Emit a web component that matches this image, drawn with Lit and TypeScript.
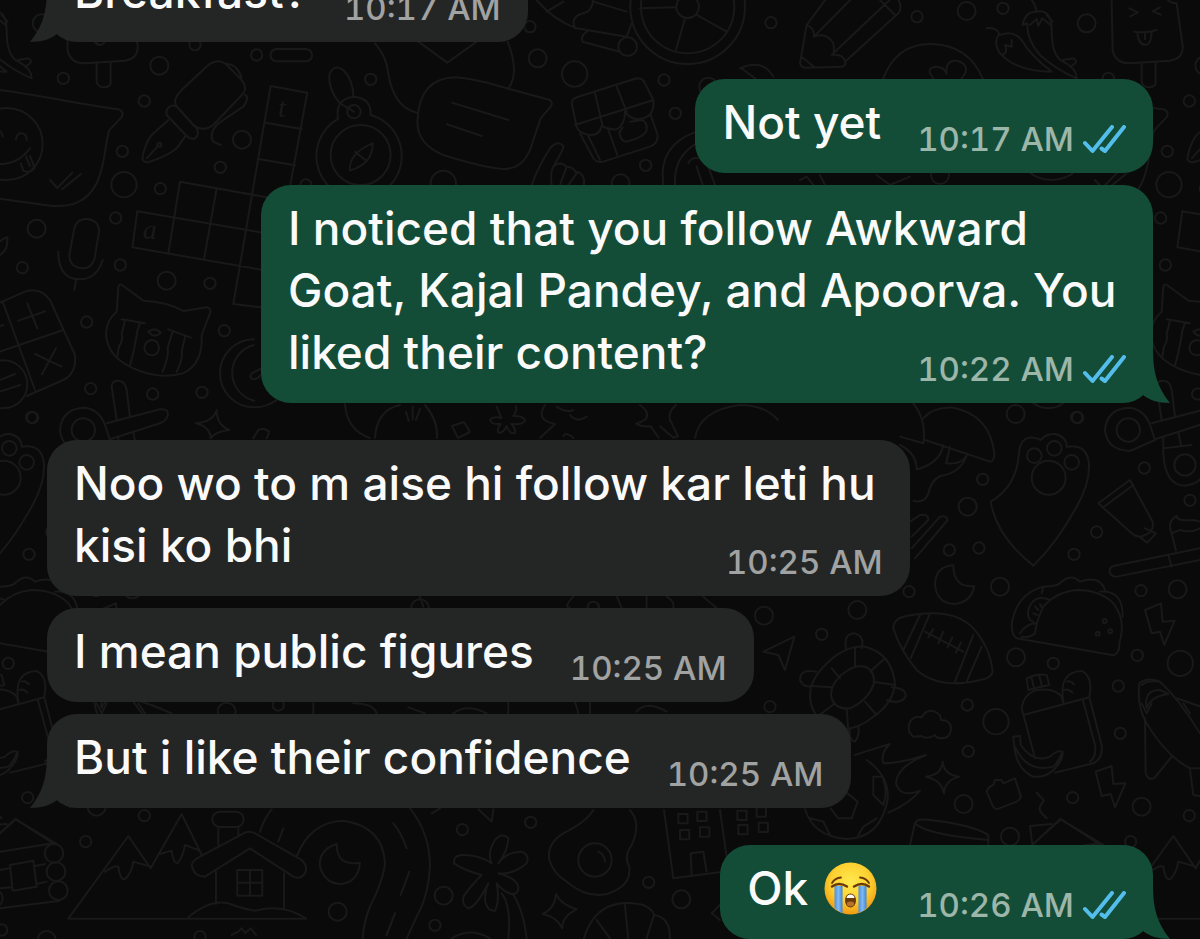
import { LitElement, html, svg, css, nothing, type TemplateResult } from "lit";
import { customElement, property } from "lit/decorators.js";

type Message = {
  side: "in" | "out";
  text: string;
  time: string;
  crying?: boolean;
  tail?: boolean;
  first?: boolean;
};

const messages: Message[] = [
  { side: "in", text: "Breakfast?", time: "10:17 AM", tail: true },
  { side: "out", text: "Not yet", time: "10:17 AM", first: true },
  {
    side: "out",
    text: "I noticed that you follow Awkward Goat, Kajal Pandey, and Apoorva. You liked their content?",
    time: "10:22 AM",
    tail: true,
  },
  { side: "in", text: "Noo wo to m aise hi follow kar leti hu kisi ko bhi", time: "10:25 AM", first: true },
  { side: "in", text: "I mean public figures", time: "10:25 AM" },
  { side: "in", text: "But i like their confidence", time: "10:25 AM", tail: true },
  { side: "out", text: "Ok", crying: true, time: "10:26 AM", tail: true, first: true },
];

/* Wallpaper doodles, grouped by region. Each group is drawn at three times its size. */
type Dot = [number, number, number];
type Letter = [number, number, string];
type Region = { x: number; y: number; dots: Dot[]; lines: string[]; letters?: Letter[] };

const S = 17;
const M = 27;
const L = 38;

const regions: Region[] = [
  {
    x: 0,
    y: 0,
    dots: [
      [585, 134, S], [770, 165, S], [478, 197, M], [433, 303, S], [1112, 238, S], [367, 454, S],
      [726, 419, M], [661, 502, S], [372, 554, L], [481, 566, S], [110, 686, M], [347, 654, S], [67, 803, S],
      [361, 795, S], [500, 842, M], [630, 850, S], [918, 555, S], [478, 434, 6],
      [20, 432, 108], [1082, 465, 90], [1062, 335, 20],
    ],
    letters: [
      [834, 352, "t"],
      [428, 718, "a"],
    ],
    lines: [
      "M-40,265 C100,280 230,312 355,328 Q372,333 366,350 L327,392 C312,450 315,500 290,550 C260,610 210,622 150,617 L-120,580",
      "M48,418 q2,-20 18,-18 q14,2 14,20 M-20,395 q25,-10 28,15 M-60,470 C-20,505 50,500 90,445 M62,490 l8,22 q20,10 34,-8 l-14,-36 M78,470 l12,28",
      "M150,540 l22,24 l45,-46 M186,568 l57,-46",
      "M525,300 Q530,285 545,270 L625,195 Q650,175 675,190 L720,235 Q745,260 730,280 L640,375 Q610,398 580,375 L535,325 Q525,315 525,300",
      "M500,345 Q495,325 515,317 Q528,315 535,325 L590,385 Q600,405 585,415 Q572,420 560,408 Z",
      "M505,360 L455,405 Q435,430 427,475 Q430,488 445,487 Q500,470 530,445 L555,410 M440,475 L475,437",
      "M680,192 q30,0 45,40 M735,285 q15,5 -5,35 L655,370 q-30,30 -15,55 l22,10",
      "M812,258 L922,278 L870,560 M812,258 L700,912 L782,922 M797,368 L905,387 M780,478 L885,496 M540,545 L800,592 M540,545 L505,760 M412,634 L800,700 M412,634 L397,742 L800,812 M650,565 L612,778",
      "M1014,357 A128 128 0 1 0 1112,345 Q1115,295 1062,290 Q1005,295 1014,357",
      "M1060,290 Q1060,240 1030,210 Q1000,190 988,225 Q985,270 1020,310 L1062,335",
      "M1050,512 Q1045,460 1118,430 Q1120,490 1050,512 M1065,455 l35,28",
      "M222,690 Q228,655 262,657 Q298,662 297,695 L284,775 Q275,807 245,805 Q208,800 208,765 Z",
      "M175,755 Q175,835 235,838 Q290,840 308,780 M228,840 l-5,30",
      "M0,765 Q25,750 22,712 Q5,715 -10,735",
      "M830,147 h88 a18,18 0 0 1 0,37 h-88 a18,18 0 0 1 0,-37",
    ],
  },
  {
    x: 380,
    y: 0,
    dots: [
      [450, 80, S], [473, 175, M], [584, 222, L], [852, 240, S], [886, 340, S], [797, 496, S], [190, 550, L],
      [722, 550, M], [1173, 68, S], [985, 260, M], [923, 20, 172], [923, 20, 140], [923, 20, 34], [743, 140, 28],
    ],
    lines: [
      "M-15,130 Q20,170 25,220 Q40,320 110,338 M115,125 L202,188 L290,125 M383,125 Q420,220 385,265",
      "M225,232 Q280,235 370,262 L510,300 Q520,310 512,320 L482,355 L450,450 Q425,510 365,507 Q300,500 190,465 Q105,430 113,355 Q120,235 225,232 M216,308 L385,360 M201,373 L305,408",
      "M455,555 Q475,500 510,445 Q530,420 550,437 Q553,445 520,500 Q510,520 515,555 M520,500 Q540,480 560,500 L540,555 M560,500 Q580,500 590,520 L565,555 M590,515 Q615,520 612,555",
      "M575,310 Q575,298 590,292 L770,235 Q790,235 795,250 L820,300 Q825,345 790,355 Q755,365 735,335 Q735,375 710,388 Q690,390 665,378 Q660,405 630,405 Q595,400 590,380 Z M585,375 L820,300 M645,280 L668,378 M710,260 L740,335",
      "M600,400 L640,475 Q650,490 670,485 L810,440 Q835,430 833,405 L812,345 M685,390 L712,465 M625,408 L660,480 M718,400 l10,-18 M750,365 L788,360 q15,10 12,30 q-5,20 -60,35 q-20,0 -22,-30",
      "M780,25 L888,22 M915,55 L888,150 M950,45 L1040,95",
      "M470,0 Q520,60 590,85 L740,110 M500,35 L550,5 M585,85 Q570,50 610,40 Q635,35 640,0 M640,5 L740,35 M620,95 Q600,110 608,125 L720,155 M740,110 L755,70",
      "M950,395 Q850,430 848,520 L850,555 M950,430 Q880,470 885,555 M925,490 q10,-20 30,-15 M950,500 l18,55 M985,500 l20,55",
      "M1080,205 Q1150,175 1180,230 M1085,205 l40,30",
    ],
  },
  {
    x: 800,
    y: 0,
    dots: [[351, 50, S], [500, 33, M], [609, 25, S], [860, 70, M], [925, 235, S], [420, 525, M]],
    lines: [
      "M120,-60 L20,75 L0,190 Q5,205 20,203 L125,200 Q140,195 135,185 L295,40 Q310,20 290,-10 M20,75 Q45,85 42,110 Q80,95 100,130 Q105,165 95,165 Q130,160 135,185 M42,110 L190,-40 M100,160 L290,-20 M240,0 L285,45 M5,170 L45,203",
      "M250,235 Q290,130 395,132 Q505,135 548,235 M400,235 Q375,205 405,200 Q435,200 440,222 Q435,180 470,182 Q505,190 496,220 L485,235",
      "M695,0 Q710,20 708,35 Q755,25 755,90 Q755,170 790,185 Q830,205 830,235 Q770,210 720,165 Q680,120 682,70 L668,75 Q675,35 708,35 M740,45 L758,65 M690,75 l20,-18 l5,20 l12,-22 l25,20",
      "M560,85 Q590,80 600,105 Q640,90 665,120 Q690,165 755,215 Q650,215 600,160 Q580,130 595,105 M605,165 q20,-5 10,-30 l20,5 l0,-20 M790,180 l30,-5 q20,10 -10,25",
      "M935,0 L938,150 Q945,190 990,190 L1110,182 Q1155,175 1147,130 L1130,10 Q1110,10 1100,-5 M1025,192 V245 Q1030,262 1048,262 Q1068,260 1067,245 V188",
      "M988,25 l25,12 l-22,12 M1080,22 l-22,12 l25,10 M1003,95 Q1040,100 1070,90 M1012,98 Q1015,135 1038,135 Q1055,130 1055,95 M1035,98 v20",
      "M0,540 l20,-10 l20,25 M60,525 l15,30 M230,525 l40,30 l60,-25",
    ],
  },
  {
    x: 0,
    y: 280,
    dots: [
      [260, 126, S], [673, 152, S], [272, 326, S], [458, 342, S], [606, 337, S], [98, 413, S],
      [10, 313, 72], [250, 450, 35], [420, 555, 32],
    ],
    lines: [
      "M350,95 L355,20 Q360,8 370,18 L430,62 Q500,65 550,93 L620,82 Q635,85 630,100 L605,165 Q610,250 550,280 Q480,300 400,265 Q320,230 318,160 Q320,120 350,95",
      "M365,118 l70,12 M375,120 q-5,25 -10,40 q5,20 -8,40 l-5,30 M420,128 q-10,25 -12,50 l-8,40 l-10,38 M445,155 q20,-15 38,3 q-20,20 -38,-3 M505,148 l68,25 M518,155 q-10,30 -15,50 q5,20 -15,70 M555,170 q-5,25 -10,45 q5,20 -15,60",
      "M455,180 q20,0 22,24 q-3,22 -22,22 q-20,-2 -22,-22 q3,-22 22,-24",
      "M0,68 L75,35 Q120,20 150,60 L225,225 Q230,280 190,300 L80,348 M8,65 L105,330 M0,215 L190,150 M82,70 l30,75 M55,122 l80,-28 M105,222 l80,38 M168,205 l-42,78 M-30,140 l40,-4 M0,300 l45,-18 M0,335 l60,-20",
      "M330,480 L255,513 Q185,510 180,450 Q185,385 255,383 Q300,390 315,435 Z",
      "M335,320 Q335,300 360,303 Q375,305 380,330 L390,410 M335,320 L350,420 M320,430 L480,388 Q510,385 502,410 Q495,425 480,430 L330,478 M355,475 V520 Q360,617 420,617 Q480,610 490,550 M355,505 L440,495 M400,457 l8,38",
      "M762,178 A102 102 0 0 0 762,382 Q800,382 830,360 M762,195 A86 86 0 0 0 762,362 M785,265 l-30,15 q-10,15 5,18 q15,-2 25,-15",
      "M650,390 Q650,435 688,450 Q645,455 632,475 Q630,440 588,430 Q640,425 650,390 M760,475 L775,450 Q790,440 808,455 L800,475",
    ],
  },
  {
    x: 900,
    y: 340,
    dots: [
      [347, 222, M], [530, 232, S], [248, 418, S], [203, 500, M], [733, 384, S], [870, 481, S], [590, 576, S],
      [522, 643, S], [148, 630, S], [237, 624, S], [27, 755, S], [300, 740, M], [723, 752, S], [833, 748, M],
      [403, 347, 22], [463, 325, 22], [515, 367, 22], [446, 413, 51],
    ],
    lines: [
      "M400,677 Q290,590 272,485 Q350,440 357,340 Q360,290 400,293 Q415,295 422,300 Q440,280 465,282 Q500,290 500,320 Q560,310 567,370 Q570,430 530,500 Q470,610 400,677",
      "M40,190 Q80,240 70,310 L0,290 M70,235 Q100,200 160,203 Q270,225 283,340 Q283,365 270,365 L75,300 M0,315 Q50,340 50,388 Q120,370 130,315 M150,320 L138,370 Q180,375 200,348 M200,348 Q180,400 120,408 Q95,420 85,460 Q75,490 40,483",
      "M30,545 L60,525 Q85,520 85,540 L35,590 M35,625 L120,530 Q140,525 143,540 L45,655",
      "M595,490 L690,420 L758,545 Q762,570 745,580 L725,590 Q705,590 695,580 Z M610,502 L700,435 M735,565 L768,580 L742,608 L718,590",
      "M640,678 L900,625 M650,710 L900,660 M640,678 Q625,685 630,700 Q638,712 650,710 M805,645 L815,680 M815,580 L828,632 M815,580 Q800,545 830,528 Q830,545 880,540 L900,545 M815,580 L840,570 Q870,580 900,565",
      "M160,675 Q105,680 105,735 Q110,790 165,792 Q215,785 223,738 Q160,745 160,675",
    ],
  },
  {
    x: 740,
    y: 600,
    dots: [
      [72, 47, M], [352, 30, M], [245, 103, S], [90, 320, S], [682, 315, S], [768, 365, L], [685, 454, S],
      [671, 612, M], [828, 172, M], [940, 190, S], [1192, 166, S], [1321, 190, L], [1135, 258, S],
      [1141, 400, S], [998, 593, S], [1205, 620, M], [1348, 647, S], [810, 710, M], [1172, 725, S],
    ],
    lines: [
      "M70,155 L163,110 L135,210 L115,165 Z",
      "M375,140 Q455,160 465,250 Q460,310 400,350 Q340,400 270,385 Q200,340 212,265 Q225,215 290,165 Q335,135 375,140",
      "M365,198 Q405,205 402,250 Q385,300 330,325 Q280,330 273,285 Q275,240 325,210 Q345,198 365,198",
      "M345,140 V200 M275,205 L300,235 M215,258 L275,262 M225,355 L285,310 M325,395 L320,325 M410,345 L375,305 M465,255 L400,245 M435,175 L390,215",
      "M318,145 Q310,100 345,100 Q375,110 365,145 M230,215 Q180,205 180,240 Q190,265 215,258 M455,262 Q500,265 497,290 Q480,315 440,300 M330,385 Q325,420 345,425 Q360,405 355,380",
      "M460,85 Q460,55 500,48 Q640,20 700,85 Q750,140 758,215 Q755,235 720,240 Q600,270 530,210 Q480,150 460,85 M540,45 L490,150 M570,40 L512,175 M700,105 L645,245 M725,140 L680,245 M555,95 L670,155 M565,112 l15,-25 M595,130 l15,-35 M622,143 l15,-30 M648,158 l15,-30",
      "M520,410 Q500,395 508,370 Q520,345 545,352 Q560,325 585,335 Q605,345 603,360 Q635,360 633,390 Q630,415 605,415 Q590,415 585,405 Q560,420 545,408 Z",
      "M380,480 Q450,530 443,600 Q420,715 320,717 Q220,710 195,628 M345,465 L375,455 L450,432 Q420,460 430,490 Q480,490 558,465 Q470,500 468,550 Q480,595 540,572 Q510,610 445,638 M400,530 L428,530 Q445,580 430,615 L400,585 Z M285,590 L320,578 L353,605 L335,655 L295,655 L272,625 M210,655 l40,10 l20,40 M355,705 l15,-25 l40,-25",
      "M608,485 Q612,525 658,530 Q615,540 612,580 Q605,540 558,530 Q605,525 608,485",
      "M510,735 L525,670 Q530,655 570,660 Q700,675 745,705 L745,735 M525,670 Q560,705 745,720",
      "M740,575 Q745,560 760,555 L765,540 L785,540 L790,550 L825,535 L843,590 Q840,600 830,605 L770,628 Q760,625 755,610 Z",
    ],
  },
  {
    x: 1000,
    y: 420,
    dots: [[314, 603, 6], [331, 634, 6], [293, 641, 6]],
    lines: [
      "M50,655 Q30,640 37,600 Q55,520 130,500 Q175,500 185,485 Q215,460 240,485 Q300,465 315,510 M50,655 L340,706 Q360,700 358,670 Q380,600 340,550 Q300,510 230,510 Q170,515 130,560 Q110,600 105,640 M125,520 l5,-20 M300,515 Q370,510 368,590",
      "M60,640 Q80,610 110,610 M65,650 Q90,655 105,640 M150,540 Q100,520 85,570 Q80,600 100,605 M105,560 l10,10 M120,552 l5,10 M100,580 l12,5",
      "M435,570 L483,550 L488,605 L524,602 L493,675 L480,635 L455,640 Z M287,1055 L335,1038 L340,1092 L376,1090 L345,1162 L332,1122 L305,1128 Z",
      "M70,885 L268,832 M65,865 Q70,825 105,812 Q160,800 185,830 L190,850 M65,865 L105,1015 M248,838 L285,975 Q290,1010 270,1025 M268,832 L305,975 Q310,1015 280,1030 L165,1058",
      "M80,775 Q110,760 140,765 L148,795 Q120,800 85,810 Z M95,775 l8,32 M118,768 l8,30 M190,845 Q175,755 245,753 Q280,770 268,830 M200,785 q12,-5 22,8 M192,810 q15,-5 25,8",
      "M40,950 L60,948 L62,975 Q100,1030 150,1010 Q170,990 188,995 Q190,1010 180,1025 Q150,1075 100,1070 Q50,1050 42,975 Z M45,980 Q80,1060 160,1040 Q180,1020 185,1000",
      "M600,940 Q540,840 480,785 Q440,770 418,790 Q410,860 440,910 Q500,1010 570,1045 L620,1045 M530,835 L620,866 M435,895 L437,1060 Q445,1085 465,1072 L515,1010 M440,865 Q430,810 480,810 L505,822 Q450,830 440,865 M425,795 Q440,780 480,785 M570,1050 L580,1125 L600,1128",
      "M110,1118 L132,1142 Q110,1165 125,1180 L140,1195 M155,1212 L90,1218 L97,1275 L180,1197 L310,1275",
    ],
  },
  {
    x: 0,
    y: 680,
    dots: [
      [1013, 695, M], [680, 95, M], [835, 75, S], [140, 780, M], [600, 770, S], [5, 750, S],
      [162, 520, 28], [168, 575, 28], [175, 632, 28], [-20, 655, 28],
    ],
    lines: [
      "M0,460 L48,418 L160,490 L0,515 M30,555 L100,542 L110,620 L38,632 Z M0,570 L28,565 M105,558 L135,552 M110,612 L140,605 M0,625 L35,622 M0,685 L180,662",
      "M918,716 H205 L385,468 L452,565 L545,402 L605,525 M315,575 Q345,555 355,560 Q360,600 375,598 Q395,580 400,545 L452,560 M480,522 L515,512 Q520,550 532,550 Q550,530 555,495 L600,512",
      "M575,555 Q580,540 600,530 L735,458 Q750,452 765,460 L905,540 Q925,560 915,580 Q900,600 880,590 L750,505 L615,590 Q580,590 575,555 M648,575 V672 M852,580 V685 M565,712 Q640,650 700,675 Q740,690 768,692 Q850,670 918,716 M655,495 V445 M715,440 V465",
      "M660,395 H708 a22,22 0 0 1 0,46 H660 a22,22 0 0 1 0,-46 M712,570 h75 v77 h-75 Z M750,570 V647 M712,608 H787",
      "M890,530 Q930,425 1030,422 Q1150,440 1155,550 Q1150,600 1110,680 Q1090,730 1088,777 M1160,765 L1185,700 M835,485 L850,445 M780,455 Q790,420 815,388",
      "M1010,492 Q955,510 960,560 Q975,612 1025,612 Q1075,605 1080,548 Q1010,560 1010,492",
      "M290,70 l15,30 l15,-30 M415,70 l20,30 M455,75 l60,25 M940,70 v30 M1060,70 Q1120,70 1130,100 M695,765 l20,-10 l10,-10 l10,14 l18,-14 l15,20",
    ],
  },
  {
    x: 380,
    y: 700,
    dots: [[247, 389, S], [452, 367, S], [806, 547, S], [904, 598, M], [191, 587, M], [165, 676, S], [645, 480, 50]],
    lines: [
      "M90,325 Q150,400 150,500 Q145,590 110,650 L80,715 M40,370 Q65,400 80,445 M88,515 L62,585 M45,640 L20,705",
      "M335,490 Q320,460 345,420 Q365,395 385,415 Q385,450 355,490 Q380,455 425,455 Q450,465 440,490 Q400,525 355,520 Q410,535 415,560 Q415,585 395,582 Q370,575 350,550 Q360,600 345,632 Q320,635 315,600 Q315,570 325,550 Q290,620 265,625 Q245,615 250,590 Q270,560 305,525 Q250,510 222,490 Q220,465 250,465 Q300,465 335,490 M365,580 Q395,620 385,715 M400,585 Q430,630 440,715",
      "M640,330 Q620,365 550,400 Q500,430 508,480 Q520,520 560,545 Q620,595 680,582 Q755,560 748,500 Q730,470 755,435 Q785,370 750,330 M655,455 q20,10 20,30",
      "M528,583 Q545,615 590,628 Q545,650 547,685 Q530,650 488,642 Q525,625 528,583",
      "M612,715 Q630,650 680,622 Q730,600 790,615 Q820,630 822,645 Q860,650 868,690 L870,715 M650,660 L690,715 M735,615 L745,715 M822,645 L800,715",
      "M852,330 L880,535 L1030,515 M1020,330 L1040,470 M935,525 L932,460 L970,455 L980,515 M895,342 h28 v28 h-28 Z M952,335 h28 v28 h-28 Z M900,390 h28 v28 h-28 Z M960,382 h28 v28 h-28 Z M1072,332 h28 v28 h-28 Z M1130,322 h28 v28 h-28 Z M1075,375 h28 v28 h-28 Z M1136,368 h28 v28 h-28 Z",
      "M155,340 L180,325 M295,328 L335,365 L340,328 M215,715 Q270,680 330,715 M995,640 L1020,615 M995,640 L1020,660",
      "M85,22 L135,40 M220,40 Q260,10 320,40 M385,5 v35 M585,5 l10,35 M630,5 v35 M770,35 Q800,0 860,35",
    ],
  },
  {
    x: 340,
    y: 400,
    dots: [[240, 625, M], [760, 622, S]],
    lines: [
      "M15,12 Q20,90 90,114 M105,114 Q110,30 180,15 M255,15 Q294,60 291,114 M198,36 l8,26 M218,20 v38 M240,26 l-12,34",
      "M336,78 l36,-12 l18,30 l-36,18 Z",
      "M470,20 q10,25 14,34 q-24,-6 -34,6 q4,14 32,12 q-14,14 -6,26 q14,2 24,-20 q8,24 24,22 q6,-10 -10,-28 q30,4 42,-10 q-4,-14 -36,-14 q12,-14 8,-30",
      "M615,15 Q585,60 645,72 L600,114 M650,20 q30,20 50,10 M690,45 q20,25 50,5 M700,114 q-20,-20 -30,-6",
      "M900,15 q30,20 18,42 q-14,10 -30,14 q16,10 44,8 l24,34 M1008,15 q-24,20 -18,44 l24,50 l-14,4 l-40,-34",
      "M1065,114 Q1080,30 1200,15 Q1275,15 1314,60",
      "M240,590 l10,30 M700,590 q-30,30 -10,35 M830,588 l15,35 M920,590 v34 M980,590 q25,15 20,34 M1090,590 q10,10 40,34",
    ],
  },
];

/* The wallpaper repeats sideways every 1045 units. */
const REPEAT = 1045;

@customElement("chat-wallpaper")
export class ChatWallpaper extends LitElement {
  static styles = css`
    :host {
      display: block;
      overflow: hidden;
    }
    .art {
      display: block;
      width: 100%;
      height: 100%;
    }
    .line {
      fill: none;
      stroke: #191919;
      stroke-width: 6;
      stroke-linecap: round;
      stroke-linejoin: round;
    }
    .letter {
      fill: #191919;
      stroke: none;
      font: italic 84px "Liberation Serif", serif;
    }
  `;

  private tile(shift: number) {
    return svg`<g transform="translate(${shift} 0)">
      ${regions.map(
        (r) => svg`<g class="line" transform="translate(${r.x} ${r.y}) scale(0.3333)">
          ${r.dots.map(([x, y, radius]) => svg`<circle cx=${x} cy=${y} r=${radius}></circle>`)}
          ${r.lines.map((d) => svg`<path d=${d}></path>`)}
          ${shift === 0
            ? (r.letters ?? []).map(([x, y, letter]) => svg`<text class="letter" x=${x} y=${y}>${letter}</text>`)
            : nothing}
        </g>`
      )}
    </g>`;
  }

  render() {
    return html`<svg class="art" aria-hidden="true">
      ${this.tile(-REPEAT)}${this.tile(0)}${this.tile(REPEAT)}
    </svg>`;
  }
}

@customElement("chat-bubble")
export class ChatBubble extends LitElement {
  @property({ attribute: false }) message!: Message;

  static styles = css`
    :host {
      display: flex;
    }
    .bubble {
      position: relative;
      box-sizing: border-box;
      padding: 12px 27px 14px;
      border-radius: 30px;
      color: #fafafa;
    }
    .in {
      margin-right: auto;
      max-width: 78%;
      background: #242626;
      --time: #a1a2a2;
    }
    .out {
      margin-left: auto;
      max-width: 892px;
      background: #144d37;
      --time: #9cb6aa;
    }
    .text {
      margin: 0;
      font-size: 46px;
      line-height: 62px;
      font-weight: 550;
    }
    .meta {
      float: right;
      display: flex;
      align-items: center;
      gap: 9px;
      height: 40px;
      margin: 28px 0 0 36px;
      color: var(--time);
      font-size: 33px;
      line-height: 40px;
      font-weight: 500;
      font-variant-numeric: tabular-nums;
      white-space: nowrap;
    }
    .ticks {
      flex: none;
      width: 43px;
      height: 29px;
      fill: none;
      stroke: #53bdeb;
      stroke-width: 4;
      stroke-linecap: round;
      stroke-linejoin: round;
    }
    .emoji {
      width: 53px;
      height: 53px;
      margin: 0 4px 0 16px;
      vertical-align: -10px;
    }
    .tail {
      position: absolute;
      bottom: 0;
      width: 30px;
      height: 60px;
      fill: #242626;
    }
    .in .tail {
      left: -17px;
    }
    .out .tail {
      right: -17px;
      fill: #144d37;
      transform: scaleX(-1);
    }
  `;

  private get tail() {
    return html`<svg class="tail" viewBox="0 0 30 60" aria-hidden="true">
      <path d="M17 0C17 24 16 40 0 60C12 60 21 57 27 52L30 30V0Z"></path>
    </svg>`;
  }

  private get ticks() {
    return html`<svg class="ticks" viewBox="0 0 43 29" role="img" aria-label="Read">
      <path d="M2 18L9.500 26L29 2M18.500 23.500L22 26L41 2"></path>
    </svg>`;
  }

  private get crying(): TemplateResult {
    return html`<svg class="emoji" viewBox="0 0 53 53" role="img" aria-label="Loudly crying face">
      <defs>
        <radialGradient id="skin" cx="50%" cy="38%" r="62%">
          <stop offset="0" stop-color="#ffe94f"></stop>
          <stop offset="0.6" stop-color="#fdd030"></stop>
          <stop offset="1" stop-color="#f09a12"></stop>
        </radialGradient>
        <linearGradient id="tear" x1="0" x2="1" y1="0" y2="0">
          <stop offset="0" stop-color="#4a8fe0"></stop>
          <stop offset="0.5" stop-color="#7db9f5"></stop>
          <stop offset="1" stop-color="#3f83d6"></stop>
        </linearGradient>
      </defs>
      <circle cx="26.5" cy="26.5" r="26" fill="url(#skin)"></circle>
      <path d="M10.500 24H18.500V51.200Q14 49.300 10.500 46Z" fill="url(#tear)"></path>
      <path d="M34.500 24H42.500V46Q39 49.300 34.500 51.200Z" fill="url(#tear)"></path>
      <g fill="none" stroke="#6b3a0a" stroke-linecap="round">
        <path d="M8 21Q11 16 17 15.500M36 15.500Q42 16 45 21" stroke-width="1.800"></path>
        <path d="M8 24.500Q15 19.500 23 24.500M30 24.500Q38 19.500 45 24.500" stroke-width="2.400"></path>
      </g>
      <ellipse cx="26.500" cy="38.500" rx="5.500" ry="7" fill="#6b3a0a"></ellipse>
      <path d="M22.500 36Q23 32.500 26.500 32.500Q30 32.500 30.500 36Z" fill="#fff"></path>
      <ellipse cx="26.500" cy="42" rx="3.600" ry="2.400" fill="#b8722c"></ellipse>
    </svg>`;
  }

  render() {
    const m = this.message;
    return html`<div class="bubble ${m.side}">
      ${m.tail ? this.tail : nothing}
      <p class="text">${m.text}${m.crying ? this.crying : nothing}<span class="meta"><time>${m.time}</time>${m.side === "out" ? this.ticks : nothing}</span></p>
    </div>`;
  }
}

@customElement("app-root")
export class AppRoot extends LitElement {
  static styles = css`
    :host {
      display: block;
      position: relative;
      height: 100vh;
      overflow: hidden;
      background: #0a0a0a;
      font-family: Inter, "Liberation Sans", sans-serif;
    }
    .wallpaper {
      position: absolute;
      inset: 0;
    }
    .chat {
      position: relative;
      box-sizing: border-box;
      height: 100%;
      padding: 0 47px;
      display: flex;
      flex-direction: column;
      justify-content: flex-end;
      gap: 12px;
    }
    .row {
      flex: none;
    }
    .first {
      margin-top: 25px;
    }
  `;

  render() {
    return html`<chat-wallpaper class="wallpaper"></chat-wallpaper>
      <main class="chat" aria-label="Conversation">
        ${messages.map(
          (m) => html`<chat-bubble class="row ${m.first ? "first" : ""}" .message=${m}></chat-bubble>`
        )}
      </main>`;
  }
}
